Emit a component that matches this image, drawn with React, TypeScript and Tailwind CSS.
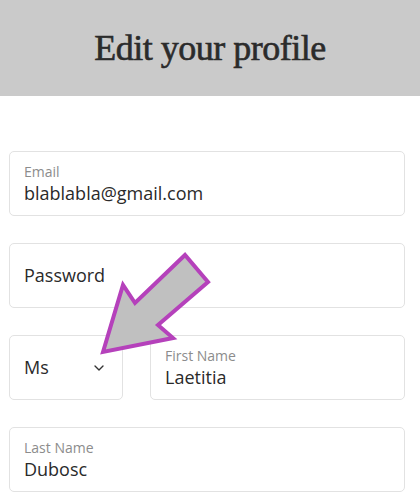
import React from 'react';
import { ChevronDown } from 'lucide-react';

const Field: React.FC<{ label: string; value: string; className?: string }> = ({ label, value, className = '' }) => (
  <div className={`h-[65px] rounded-[5px] border border-[#e2e2e2] bg-white px-[14px] pt-[11px] ${className}`}>
    <div className="text-[14px] leading-[18px] text-[#8c8c8c]">{label}</div>
    <div className="text-[18px] leading-[24px] text-[#2a2a2a]">{value}</div>
  </div>
);

const App: React.FC = () => {
  return (
    <div className="relative w-[420px] h-[502px] overflow-hidden bg-white font-['Open_Sans',sans-serif]">
      <header className="h-[96px] bg-[#cacaca] flex items-center justify-center">
        <h1 className="font-['Liberation_Serif',serif] text-[36px] font-normal tracking-[-0.5px] text-[#2b2b2b] leading-none [-webkit-text-stroke:0.6px_#2b2b2b]">
          Edit your profile
        </h1>
      </header>

      <div className="flex flex-col gap-[27px] pl-[9px] pr-[15px] pt-[55px]">
        <Field label="Email" value="blablabla@gmail.com" />

        <div className="h-[65px] rounded-[5px] border border-[#e2e2e2] bg-white px-[14px] flex items-center">
          <span className="text-[18px] text-[#2a2a2a]">Password</span>
        </div>

        <div className="flex gap-[27px]">
          <div className="w-[114px] h-[65px] rounded-[5px] border border-[#e2e2e2] bg-white pl-[14px] pr-[15px] flex items-center justify-between">
            <span className="text-[18px] text-[#2a2a2a]">Ms</span>
            <ChevronDown className="w-4 h-4 text-[#333]" strokeWidth={2} />
          </div>
          <Field label="First Name" value="Laetitia" className="flex-1" />
        </div>

        <Field label="Last Name" value="Dubosc" />
      </div>

      <svg className="absolute left-0 top-0 pointer-events-none" width="420" height="502">
        <polygon
          points="103,352 123,285 135,303 185,255 208,282 158,325 173,338"
          fill="#c0c0c0"
          stroke="#b541bb"
          strokeWidth="4"
          strokeLinejoin="miter"
        />
      </svg>
    </div>
  );
};

export default App;
